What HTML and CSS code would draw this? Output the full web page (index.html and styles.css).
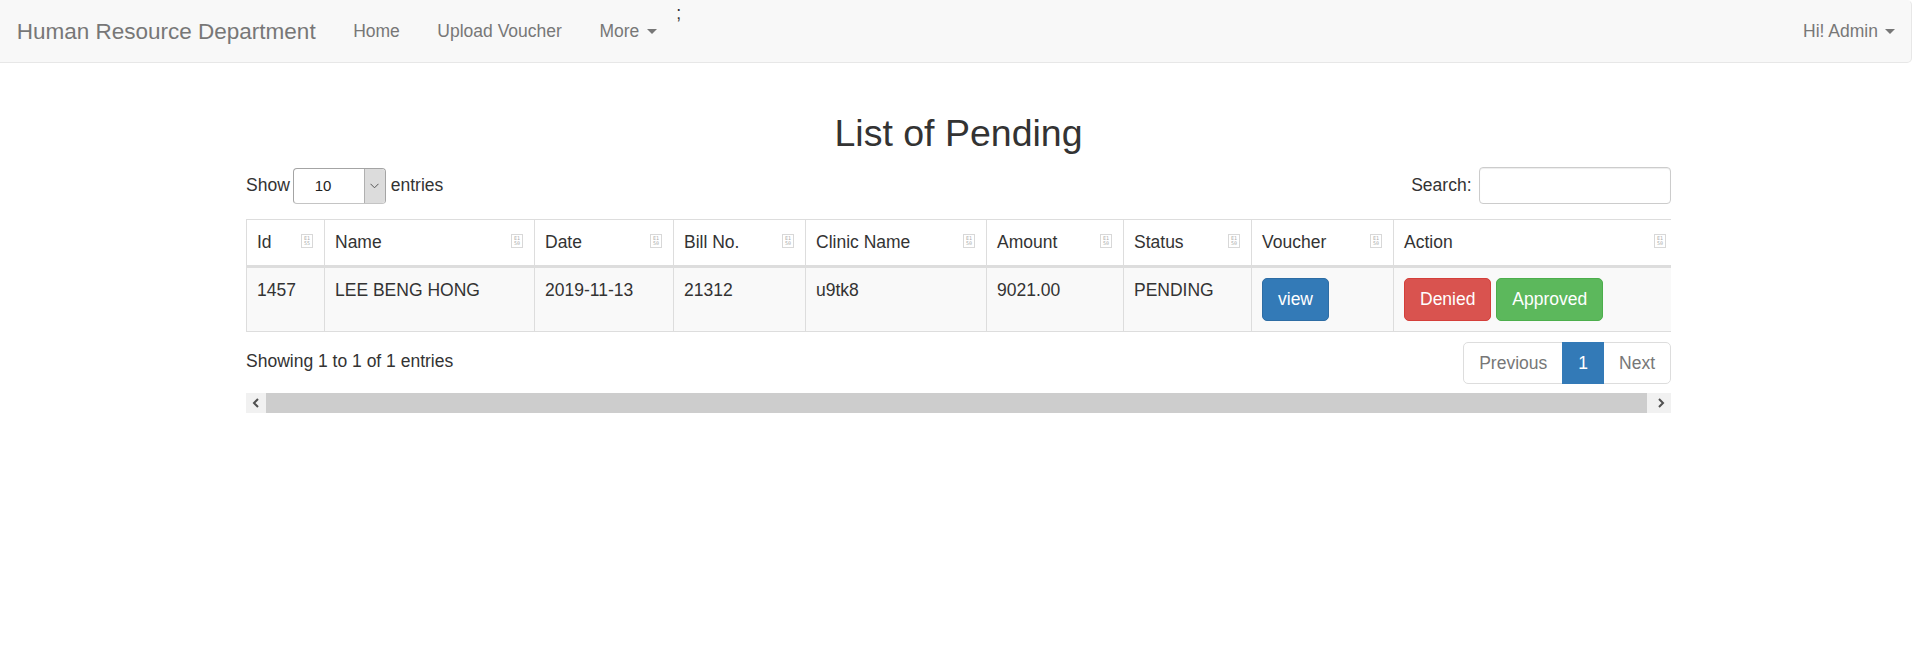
FILE: index.html
```html
<!DOCTYPE html>
<html lang="en">
<head>
<meta charset="utf-8">
<title>List of Pending</title>
<link rel="stylesheet" href="styles.css">
</head>
<body>
<nav class="navbar">
  <a class="brand" href="#">Human Resource Department</a>
  <ul class="nav">
    <li><a href="#">Home</a></li>
    <li><a href="#">Upload Voucher</a></li>
    <li><a href="#">More <span class="caret"></span></a></li>
  </ul>
  <span class="stray">;</span>
  <ul class="nav nav-right">
    <li><a href="#">Hi! Admin <span class="caret"></span></a></li>
  </ul>
</nav>

<main class="container">
  <h2 class="title">List of Pending</h2>

  <div class="dt-wrapper">
    <div class="dt-top">
      <label class="dt-length">
        <span>Show</span>
        <span class="select">
          <span class="select-value">10</span>
          <span class="select-arrow"><svg width="9" height="6" viewBox="0 0 9 6"><polyline points="0.5,0.8 4.5,4.8 8.5,0.8" fill="none" stroke="#555" stroke-width="1"/></svg></span>
        </span>
        <span>entries</span>
      </label>
      <label class="dt-filter">
        <span>Search:</span>
        <input class="search-input" type="text" aria-label="Search">
      </label>
    </div>

    <table class="dt-table">
      <colgroup>
        <col class="c-id"><col class="c-name"><col class="c-date"><col class="c-bill"><col class="c-clinic"><col class="c-amount"><col class="c-status"><col class="c-voucher"><col class="c-action">
      </colgroup>
      <thead>
        <tr>
          <th><div class="th-in"><span>Id</span><span class="sort"><span>E1</span><span>55</span></span></div></th>
          <th><div class="th-in"><span>Name</span><span class="sort"><span>E1</span><span>50</span></span></div></th>
          <th><div class="th-in"><span>Date</span><span class="sort"><span>E1</span><span>50</span></span></div></th>
          <th><div class="th-in"><span>Bill No.</span><span class="sort"><span>E1</span><span>50</span></span></div></th>
          <th><div class="th-in"><span>Clinic Name</span><span class="sort"><span>E1</span><span>50</span></span></div></th>
          <th><div class="th-in"><span>Amount</span><span class="sort"><span>E1</span><span>50</span></span></div></th>
          <th><div class="th-in"><span>Status</span><span class="sort"><span>E1</span><span>50</span></span></div></th>
          <th><div class="th-in"><span>Voucher</span><span class="sort"><span>E1</span><span>50</span></span></div></th>
          <th><div class="th-in"><span>Action</span><span class="sort"><span>E1</span><span>50</span></span></div></th>
        </tr>
      </thead>
      <tbody>
        <tr>
          <td>1457</td>
          <td>LEE BENG HONG</td>
          <td>2019-11-13</td>
          <td>21312</td>
          <td>u9tk8</td>
          <td>9021.00</td>
          <td>PENDING</td>
          <td><button class="btn btn-primary" type="button">view</button></td>
          <td><button class="btn btn-danger" type="button">Denied</button> <button class="btn btn-success" type="button">Approved</button></td>
        </tr>
      </tbody>
    </table>

    <div class="dt-bottom">
      <div class="dt-info">Showing 1 to 1 of 1 entries</div>
      <ul class="pagination">
        <li class="disabled"><a href="#">Previous</a></li>
        <li class="active"><a href="#">1</a></li>
        <li class="disabled"><a href="#">Next</a></li>
      </ul>
    </div>
  </div>

  <div class="hscroll">
    <span class="hs-btn"><svg width="8" height="10" viewBox="0 0 8 10"><polyline points="6,1 2,5 6,9" fill="none" stroke="#505050" stroke-width="2"/></svg></span>
    <span class="hs-thumb"></span>
    <span class="hs-btn hs-btn-right"><svg width="8" height="10" viewBox="0 0 8 10"><polyline points="2,1 6,5 2,9" fill="none" stroke="#505050" stroke-width="2"/></svg></span>
  </div>
</main>
</body>
</html>
```

FILE: styles.css
```css
* {
  box-sizing: border-box;
}

html,
body {
  margin: 0;
  padding: 0;
}

body {
  font-family: "Liberation Sans", Arial, Helvetica, sans-serif;
  font-size: 17.5px;
  line-height: 25px;
  color: #333;
  background: #fff;
}

a {
  text-decoration: none;
}

ul {
  list-style: none;
  margin: 0;
  padding: 0;
}

/* ---------- navbar ---------- */
.navbar {
  display: flex;
  align-items: flex-start;
  width: 1912px;
  height: 63px;
  background: #f8f8f8;
  border: 1px solid #e7e7e7;
  border-top-color: transparent;
  border-left: 0;
  border-radius: 0 5px 5px 0;
  margin-bottom: 25px;
}

.brand {
  display: block;
  margin-left: -2px;
  padding: 17.5px 18.75px;
  font-size: 22.5px;
  line-height: 25px;
  color: #777;
}

.nav {
  display: flex;
}

.nav a {
  display: block;
  padding: 17.5px 18.75px;
  line-height: 25px;
  color: #777;
}

.nav-right {
  margin-left: auto;
  margin-right: -3px;
}

.caret {
  display: inline-block;
  width: 0;
  height: 0;
  margin-left: 2.5px;
  vertical-align: middle;
  border-top: 5px solid #777;
  border-left: 5px solid transparent;
  border-right: 5px solid transparent;
}

.stray {
  display: block;
  margin-left: 1px;
  line-height: 25px;
  color: #333;
}

/* ---------- page ---------- */
.container {
  display: flow-root;
  width: 1425px;
  margin: 0 auto;
}

.title {
  margin: 25px 0 12.5px;
  font-size: 37.5px;
  line-height: 41.25px;
  font-weight: 500;
  text-align: center;
}

.dt-wrapper {
  width: 1425px;
  overflow: hidden;
}

.dt-top {
  display: flex;
  justify-content: space-between;
  align-items: center;
  height: 37.5px;
  margin-bottom: 15px;
}

.dt-length,
.dt-filter {
  display: flex;
  align-items: center;
  font-weight: normal;
  white-space: nowrap;
}

.dt-length {
  gap: 3px;
}

.select {
  display: flex;
  width: 93px;
  height: 36px;
  margin: 0 2px 0 0;
  background: #fff;
  border: 1px solid #a4a4a4;
  border-bottom-color: #c4c4c4;
  border-radius: 4px;
  overflow: hidden;
}

.select-value {
  flex: 1;
  padding-left: 21px;
  font-size: 15px;
  line-height: 34px;
  color: #222;
}

.select-arrow {
  width: 21px;
  display: flex;
  align-items: center;
  justify-content: center;
  background: #dcdcdc;
  border-left: 1px solid #b0b0b0;
}

.search-input {
  display: block;
  width: 192px;
  height: 36.5px;
  margin: 0 0 0 7.5px;
  padding: 5px 12.5px;
  font: inherit;
  font-size: 15px;
  border: 1px solid #ccc;
  border-radius: 4px;
  box-shadow: inset 0 1px 1px rgba(0, 0, 0, 0.075);
  background: #fff;
}

/* ---------- table ---------- */
.dt-table {
  width: 1432px;
  table-layout: fixed;
  border-collapse: separate;
  border-spacing: 0;
  border: 1px solid #ddd;
  margin: 0 0 7.5px;
}

.c-id { width: 78px; }
.c-name { width: 210px; }
.c-date { width: 139px; }
.c-bill { width: 132px; }
.c-clinic { width: 181px; }
.c-amount { width: 137px; }
.c-status { width: 128px; }
.c-voucher { width: 142px; }
.c-action { width: 283px; }

.dt-table th {
  padding: 10px 11px 10px 10px;
  text-align: left;
  font-weight: normal;
  vertical-align: bottom;
  border-right: 1px solid #ddd;
  border-bottom: 2px solid #ddd;
  background: #fff;
}

.th-in {
  display: flex;
  justify-content: space-between;
  align-items: flex-start;
}

.sort {
  flex: none;
  width: 12px;
  height: 14px;
  margin-top: 4px;
  display: flex;
  flex-direction: column;
  align-items: center;
  justify-content: center;
  border: 1px solid #c8c8c8;
  font-family: "DejaVu Sans Mono", monospace;
  font-size: 5px;
  line-height: 5px;
  color: #888;
  opacity: 0.7;
}

.dt-table td {
  padding: 10px;
  vertical-align: top;
  border-top: 1px solid #ddd;
  border-right: 1px solid #ddd;
  background: #f9f9f9;
  white-space: nowrap;
}

.dt-table th:last-child,
.dt-table td:last-child {
  border-right: 0;
}

.btn {
  display: inline-block;
  margin: 0;
  padding: 7.75px 15px;
  font-family: inherit;
  font-size: 17.5px;
  line-height: 25px;
  color: #fff;
  border: 1px solid transparent;
  border-radius: 5px;
  cursor: pointer;
}

.btn-primary {
  background: #337ab7;
  border-color: #2e6da4;
}

.btn-danger {
  background: #d9534f;
  border-color: #d43f3a;
}

.btn-success {
  background: #5cb85c;
  border-color: #4cae4c;
}

/* ---------- bottom ---------- */
.dt-bottom {
  display: flex;
  justify-content: space-between;
  align-items: flex-start;
}

.dt-info {
  padding-top: 10px;
  white-space: nowrap;
}

.pagination {
  display: flex;
  margin: 2.5px 0;
}

.pagination a {
  display: block;
  padding: 7.75px 15px;
  line-height: 25px;
  color: #777;
  background: #fff;
  border: 1px solid #ddd;
}

.pagination li + li a {
  margin-left: -1px;
}

.pagination li:first-child a {
  border-radius: 5px 0 0 5px;
}

.pagination li:last-child a {
  border-radius: 0 5px 5px 0;
}

.pagination .active a {
  position: relative;
  z-index: 1;
  color: #fff;
  background: #337ab7;
  border-color: #337ab7;
}

/* ---------- horizontal scrollbar ---------- */
.hscroll {
  display: flex;
  height: 19.5px;
  margin-top: 6.5px;
  background: #f1f1f1;
}

.hs-btn {
  width: 20px;
  display: flex;
  align-items: center;
  justify-content: center;
}

.hs-btn-right {
  width: 21px;
}

.hs-thumb {
  flex: 1;
  margin-right: 3px;
  background: #cdcdcd;
}
```
